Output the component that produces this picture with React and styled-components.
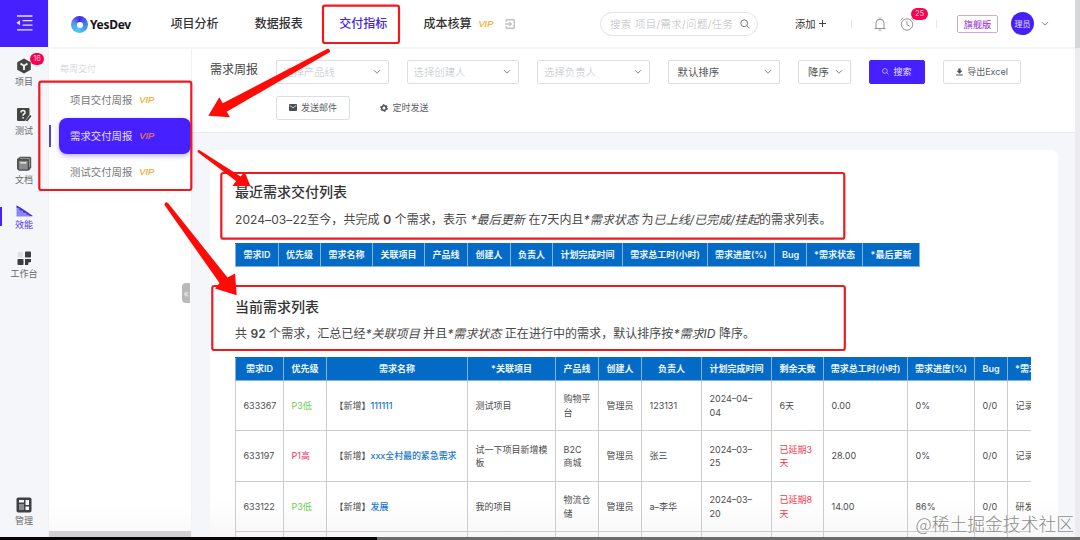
import React from 'react';
import styled, { createGlobalStyle, css } from 'styled-components';

const GlobalStyle = createGlobalStyle`
  * {
    box-sizing: border-box;
  }

  body {
    margin: 0;
    overflow: hidden;
    background: #fff;
    color: #444;
    font-family: Inter, "Noto Sans CJK SC", sans-serif;
    font-size: 9px;
  }

  h3, p {
    margin: 0;
  }
`;

const Screen = styled.div`
  position: relative;
  display: flex;
  flex-direction: column;
  width: 1080px;
  height: 540px;
  overflow: hidden;
`;

const Window = styled.div`
  display: flex;
  height: 537px;
`;

const DesktopEdge = styled.div`
  height: 3px;
  background: linear-gradient(90deg, #080607 377px, #6b6b6b 377px);
`;

const Scrollbar = styled.div`
  width: 5px;
  background: #ececee;
`;

const ScrollThumb = styled.div`
  height: 48px;
  background: #d6d7da;
`;

/* left rail */

const Rail = styled.aside`
  display: flex;
  flex-direction: column;
  width: 49px;
  background: #f4f6fa;
  border-right: 1px solid #f0f1f4;
`;

const RailToggle = styled.div`
  display: flex;
  align-items: center;
  justify-content: center;
  width: 48px;
  height: 47px;
  margin-bottom: 11px;
  padding-bottom: 2px;
  background: #4620ff;
`;

const RailItem = styled.div`
  position: relative;
  display: flex;
  flex-direction: column;
  align-items: center;
  width: 48px;
  margin-bottom: ${props => (props.$last ? '8px' : '17px')};
  margin-top: ${props => (props.$last ? 'auto' : '0')};
  color: ${props => (props.$active ? '#4a35e8' : '#6a6a6a')};

  svg {
    display: block;
  }

  ${props => props.$active && css`
    &:before {
      content: '';
      position: absolute;
      left: 0;
      top: 2px;
      width: 2px;
      height: 19px;
      background: #4620ff;
    }
  `}
`;

const RailLabel = styled.span`
  font-size: 9px;
  line-height: 15px;
  padding-bottom: 1px;
`;

const Badge = styled.span`
  position: absolute;
  left: ${props => props.$left};
  top: ${props => props.$top};
  min-width: ${props => props.$width};
  height: 12px;
  border-radius: 6px;
  background: #f80052;
  color: #ffc9da;
  font-size: 7.5px;
  line-height: 12px;
  text-align: center;
`;

/* header */

const Page = styled.div`
  display: flex;
  flex-direction: column;
  width: 1026px;
`;

const Header = styled.header`
  display: flex;
  align-items: center;
  height: 49px;
  padding-left: 22px;
  border-bottom: 2px solid #f5f5f6;
  background: #fff;
  flex-shrink: 0;
`;

const Brand = styled.div`
  display: flex;
  align-items: center;
  gap: 2px;
  width: 99.500px;
  padding-top: 2px;
  color: #151515;
  font-family: "Noto Sans", sans-serif;
  font-size: 12px;
  font-weight: 700;
  letter-spacing: -0.3px;
`;

const BrandMark = styled.span`
  display: flex;
  align-items: center;
  justify-content: center;
  width: 17px;
  height: 17px;
  border-radius: 50%;
  background: conic-gradient(#4a22ea, #3e6cf0 18%, #3f9df5 35%, #4fc6f8 52%, #48b6f5 66%, #5b8cf4 80%, #3f2ad5);

  &:after {
    content: '';
    width: 6px;
    height: 6px;
    border-radius: 50%;
    background: #fff;
  }
`;

const Nav = styled.nav`
  display: flex;
  align-items: center;
  gap: 36.3px;
  width: 429.500px;
  padding-top: 1px;
`;

const NavItem = styled.div`
  display: flex;
  align-items: center;
  color: ${props => (props.$active ? '#4325e6' : '#333')};
  font-size: 12px;
  font-weight: 500;
  line-height: 20px;
  white-space: nowrap;

  svg {
    margin-left: 12px;
  }
`;

const Vip = styled.span`
  margin-left: 7px;
  color: ${props => (props.$hot ? '#ef7d4c' : '#f0a928')};
  font-family: "Liberation Sans", sans-serif;
  font-size: 9.2px;
  font-style: italic;
  font-weight: 400;
  -webkit-text-stroke: 0.2px currentColor;
`;

const SearchBox = styled.div`
  display: flex;
  align-items: center;
  justify-content: space-between;
  width: 158px;
  height: 24px;
  margin-right: 37px;
  padding: 0 7px 0 9px;
  border: 1px solid #e2e3e6;
  border-radius: 12px;
  color: #b9bbc0;
  font-size: 10.4px;
  font-weight: 300;
  letter-spacing: 0.4px;
  white-space: nowrap;
`;

const AddLink = styled.div`
  display: flex;
  align-items: center;
  gap: 3px;
  width: 56px;
  color: #333;
  font-size: 10.3px;
`;

const Divider = styled.span`
  width: 1px;
  height: 8px;
  background: #e6e6e8;
`;

const Alerts = styled.div`
  position: relative;
  display: flex;
  align-items: center;
  gap: 13.5px;
  width: 84px;
  padding-left: 22px;
`;

const Edition = styled.div`
  display: flex;
  align-items: center;
  justify-content: center;
  width: 41px;
  height: 18px;
  margin: 0 13px 0 20px;
  border: 1px solid #cfa6e6;
  border-radius: 2px;
  color: #9425cc;
  font-size: 9.2px;
`;

const Avatar = styled.div`
  display: flex;
  align-items: center;
  justify-content: center;
  width: 23px;
  height: 23px;
  margin-right: 7px;
  border-radius: 50%;
  background: #4620f5;
  color: #e6e0ff;
  font-size: 8px;
`;

/* second level menu */

const Columns = styled.div`
  display: flex;
  height: 488px;
`;

const SideMenu = styled.aside`
  position: relative;
  display: flex;
  flex-direction: column;
  width: 143px;
  background: linear-gradient(#fff 455px, #fafafa 482px);
  border-right: 1px solid #f1f2f4;
`;

const MenuCaption = styled.div`
  height: 33px;
  padding: 13px 0 0 11px;
  color: #c9cbcf;
  font-size: 9px;
  font-weight: 300;
  line-height: 14px;
`;

const MenuItem = styled.div`
  position: relative;
  display: flex;
  align-items: center;
  height: 36px;
  margin-left: 10px;
  padding: 0 0 1px 11px;
  border-radius: 8px;
  color: #777;
  font-size: 10.4px;

  ${props => props.$active && css`
    background: #4620ff;
    box-shadow: 0 2px 5px rgba(70, 32, 255, 0.35);
    color: #e6e0ff;

    &:before {
      content: '';
      position: absolute;
      left: -10px;
      width: 2px;
      height: 22px;
      background: #5546d0;
    }
  `}
`;

const Collapse = styled.div`
  position: absolute;
  right: 1px;
  top: 234px;
  display: flex;
  align-items: center;
  justify-content: center;
  width: 8px;
  height: 20px;
  border-radius: 4px 0 0 4px;
  background: #b9b9b9;
  color: #eee;
  font-size: 9px;
`;

const MenuScroll = styled.div`
  height: 6px;
  margin-top: auto;
  background: #d2d2d5;
`;

/* content */

const Content = styled.main`
  display: flex;
  flex-direction: column;
  width: 883px;
  background: #f4f6f9;
`;

const Filters = styled.section`
  display: flex;
  gap: 18px;
  height: 84px;
  padding: 11px 0 0 18px;
  border-bottom: 1px solid #e9eaed;
  background: #fff;
  flex-shrink: 0;
`;

const FilterTitle = styled.div`
  width: 48px;
  color: #444;
  font-size: 12px;
  line-height: 20px;
  white-space: nowrap;
`;

const FilterRows = styled.div`
  display: flex;
  flex-direction: column;
  gap: 12px;
`;

const FilterRow = styled.div`
  display: flex;
  align-items: center;
  gap: ${props => props.$gap || '18px'};
`;

const Select = styled.div`
  display: flex;
  align-items: center;
  justify-content: space-between;
  width: ${props => props.$width || '112.5px'};
  height: 24px;
  padding: 0 7px 1px ${props => (props.$filled ? '9px' : '6px')};
  border: 1px solid #dcdee3;
  border-radius: 2px;
  color: ${props => (props.$filled ? '#555' : '#bdbfc5')};
  font-size: 10.4px;
  font-weight: ${props => (props.$filled ? 400 : 300)};
  white-space: nowrap;
`;

const Button = styled.div`
  display: flex;
  align-items: center;
  justify-content: center;
  gap: 4px;
  width: ${props => props.$width};
  height: 24px;
  padding-bottom: 1px;
  border: 1px solid ${props => (props.$primary ? '#4620ff' : props.$plain ? 'transparent' : '#dcdee3')};
  border-radius: 2px;
  background: ${props => (props.$primary ? '#4620ff' : '#fff')};
  color: ${props => (props.$primary ? '#e9e4ff' : '#5c5e63')};
  font-size: 9px;
`;

const Card = styled.section`
  flex: 1;
  width: 848px;
  margin: 17px 0 0 18px;
  padding: 31px 27px 0 25px;
  border-radius: 6px 6px 0 0;
  background: linear-gradient(#fff 350px, #f7f7f7 387px);
  overflow: hidden;
`;

const Heading = styled.h3`
  color: #333;
  font-size: 14px;
  font-weight: 500;
  line-height: 22px;
`;

const Summary = styled.p`
  margin: ${props => props.$margin};
  color: #484848;
  font-size: 12px;
  line-height: 20px;
  letter-spacing: ${props => props.$tracking};
  white-space: nowrap;

  b {
    font-weight: 600;
  }
`;

const TableWrap = styled.div`
  width: 796px;
  overflow: hidden;
  margin-bottom: ${props => props.$bottom || '0'};
`;

const Table = styled.table`
  width: ${props => props.$width}px;
  border-collapse: collapse;
  table-layout: fixed;
  line-height: 13.5px;
`;

const Th = styled.th`
  height: 23px;
  padding: 0;
  border: 1px solid #82b4df;
  border-top-color: #0a6cc4;
  background: #036bc5;
  color: #eef6ff;
  font-size: 9px;
  font-weight: 600;
  white-space: nowrap;
`;

const Td = styled.td`
  height: ${props => props.$height || 50}px;
  padding: 0 0 0 7.5px;
  border: 1px solid #ccc;
  color: ${props => props.$color || '#4c4c4c'};
  font-size: 9px;
  white-space: pre;
  vertical-align: middle;

  a {
    color: #1c78c8;
    font-weight: 500;
    letter-spacing: -0.1px;
  }
`;

const Annotations = styled.svg`
  position: absolute;
  inset: 0;
  pointer-events: none;
`;

const Watermark = styled.div`
  position: absolute;
  right: 6px;
  bottom: 4px;
  color: rgba(105, 105, 105, 0.8);
  font-family: "Noto Sans CJK SC", sans-serif;
  font-size: 17.8px;
  font-weight: 300;
  line-height: 26px;
  text-shadow: 0 0 1px #fff;
  white-space: nowrap;
`;

const Chevron = () => (
  <svg width="8" height="6" viewBox="0 0 8 6" fill="none" stroke="#85878c">
    <path d="M1 1.2l3 3 3-3" />
  </svg>
);

const Magnifier = ({ size = 10, color = '#777' }) => (
  <svg width={size} height={size} viewBox="0 0 10 10" fill="none" stroke={color}>
    <circle cx="4.2" cy="4.2" r="3.4" />
    <path d="M6.8 6.8L9.5 9.3" />
  </svg>
);

const ToggleIcon = () => (
  <svg width="17" height="16" viewBox="0 0 17 16" fill="none" stroke="#e8e3ff" strokeWidth="1.3">
    <path d="M1 1h15.500M6.500 5.600h10M6.500 10.200h10M1 14.800h15.500" />
    <path d="M4 5.300v5L0.300 7.800z" fill="#e8e3ff" stroke="none" />
  </svg>
);

const CubeIcon = () => (
  <svg width="16" height="16" viewBox="0 0 16 16">
    <path d="M8 .5l6.800 3.700v7.600L8 15.500 1.200 11.800V4.200z" fill="#444" />
    <path d="M4.500 5.500L8 8l3.500-2.500M8 8v4" fill="none" stroke="#f4f6fa" strokeWidth="1.800" />
  </svg>
);

const TestIcon = () => (
  <svg width="16" height="16" viewBox="0 0 16 16">
    <path d="M2 1h10.500q1 0 1 1v5.500L9 14H2q-1 0-1-1V2q0-1 1-1z" fill="#444" />
    <path d="M5 5.600q0-2 2-2t2 1.800q0 1-1 1.600T7 8.800M7 10v1.600" fill="none" stroke="#f4f6fa" strokeWidth="1.500" />
    <path d="M14.800 8.500L10.500 14" stroke="#444" strokeWidth="2" />
  </svg>
);

const DocIcon = () => (
  <svg width="16" height="16" viewBox="0 0 16 16">
    <path d="M4 .8h10q1.200 0 1.200 1.200v9.500l-2 3H3L1 13V3z" fill="#555" />
    <rect x="2.200" y="4.200" width="10" height="9.800" rx="1" fill="#8c8c8c" stroke="#444" />
    <path d="M4.200 6.900h6.200" stroke="#eee" strokeWidth="1.300" />
    <path d="M4 2.500h9.500v8.500" fill="none" stroke="#aaa" strokeWidth=".7" />
  </svg>
);

const TrendIcon = () => (
  <svg width="17" height="12" viewBox="0 0 17 12">
    <path d="M0.500 .5L16.500 10.500v1H.5z" fill="#8f86f3" />
    <path d="M.5.5v2l3 1v1.800l3.500.4v1.800l3.500.5v1.500l3 .5v1h3L10 6.200 4 2.200z" fill="#4030d8" />
  </svg>
);

const BlocksIcon = () => (
  <svg width="16" height="16" viewBox="0 0 16 16">
    <rect x="1.500" y="2" width="5.500" height="5.500" fill="#e0e0e2" />
    <rect x="9" y="1.500" width="6" height="6" rx=".8" fill="#3c3c3c" />
    <rect x="1.500" y="9" width="6" height="6" rx=".8" fill="#3c3c3c" />
    <path d="M9 9h6v3l-2.500.5-.5 2.500H9z" fill="#3c3c3c" />
  </svg>
);

const ManageIcon = () => (
  <svg width="16" height="16" viewBox="0 0 16 16">
    <rect x=".5" y=".5" width="15" height="15" rx="1.800" fill="#3d4143" />
    <path d="M3 3h5v2.500H3zM9.500 3H13v5H9.500zM9.500 9.500H13V13H9.500z" fill="#f4f6fa" />
    <path d="M3 7h5v6H3z" fill="#8b8e8f" />
  </svg>
);

const LeaveIcon = () => (
  <svg width="10" height="10" viewBox="0 0 10 10" fill="none" stroke="#8c8e93" strokeWidth=".8">
    <path d="M1 2.800V.8h8.200v8.400H1V7.200M0 5h6.200M4.400 3L6.400 5l-2 2" />
  </svg>
);

const BellIcon = () => (
  <svg width="12" height="14" viewBox="0 0 12 14" fill="none" stroke="#85878c" strokeWidth=".9">
    <path d="M.5 11.500h11M2 11.300V6q0-3.800 4-3.800T10 6v5.300M6 2.200V.5M4.800 13.200h2.400" />
  </svg>
);

const ClockIcon = () => (
  <svg width="14" height="14" viewBox="0 0 14 14" fill="none" stroke="#85878c" strokeWidth=".9">
    <circle cx="7" cy="7.500" r="5.700" />
    <path d="M7 4.200v3.600l2.800 1.300M.5 3.200L3 .8M11 .8l2.500 2.400" />
  </svg>
);

const MailIcon = () => (
  <svg width="8" height="7" viewBox="0 0 8 7">
    <rect width="8" height="7" rx=".8" fill="#4c4e52" />
    <path d="M.8 1.500L4 3.800l3.200-2.300" fill="none" stroke="#fff" strokeWidth=".7" />
  </svg>
);

const GearIcon = () => (
  <svg width="8" height="8" viewBox="0 0 8 8" fill="none" stroke="#4c4e52">
    <circle cx="4" cy="4" r="2.300" strokeWidth="1.500" />
    <circle cx="4" cy="4" r="3.400" strokeWidth="1" strokeDasharray="1.780 1.780" />
  </svg>
);

const DownloadIcon = () => (
  <svg width="7" height="8" viewBox="0 0 7 8" fill="#4c4e52">
    <path d="M2.400.5h2.200v2.300h1.900L3.500 5.700.5 2.800h1.900zM.2 6.600h6.600v1H.2z" />
  </svg>
);

const rail = [
  { label: '项目', icon: <CubeIcon />, badge: '16' },
  { label: '测试', icon: <TestIcon /> },
  { label: '文档', icon: <DocIcon /> },
  { label: '效能', icon: <TrendIcon />, active: true },
  { label: '工作台', icon: <BlocksIcon /> },
  { label: '管理', icon: <ManageIcon />, last: true },
];

const recentColumns = [
  ['需求ID', 43], ['优先级', 42], ['需求名称', 52], ['关联项目', 52], ['产品线', 43], ['创建人', 43],
  ['负责人', 42], ['计划完成时间', 70], ['需求总工时(小时)', 85], ['需求进度(%)', 67], ['Bug', 32],
  ['*需求状态', 56], ['*最后更新', 57],
];

const currentColumns = [
  ['需求ID', 48], ['优先级', 43], ['需求名称', 141], ['*关联项目', 88], ['产品线', 43], ['创建人', 43],
  ['负责人', 60], ['计划完成时间', 70], ['剩余天数', 52], ['需求总工时(小时)', 84], ['需求进度(%)', 67],
  ['Bug', 33], ['*需求状态', 56],
];

const demands = [
  { id: '633367', level: 'P3低', name: '111111', project: '测试项目', line: '购物平\n台', owner: '123131', due: '2024–04–\n04', left: '6天', hours: '0.00', progress: '0%', status: '记录' },
  { id: '633197', level: 'P1高', name: 'xxx全村最的紧急需求', project: '试一下项目新增模\n板', line: 'B2C\n商城', owner: '张三', due: '2024–03–\n25', left: '已延期3\n天', hours: '28.00', progress: '0%', status: '记录' },
  { id: '633122', level: 'P3低', name: '发展', project: '我的项目', line: '物流仓\n储', owner: 'a–李华', due: '2024–03–\n20', left: '已延期8\n天', hours: '14.00', progress: '86%', status: '研发' },
];

const HeadRow = ({ columns }) => (
  <>
    <colgroup>
      {columns.map(([label, width]) => <col key={label} width={width} />)}
    </colgroup>
    <thead>
      <tr>
        {columns.map(([label]) => <Th key={label}>{label}</Th>)}
      </tr>
    </thead>
  </>
);

const sum = columns => columns.reduce((total, [, width]) => total + width, 1);

const DemandRow = ({ row, height }) => (
  <tr>
    <Td $height={height}>{row.id}</Td>
    <Td $color={row.level === 'P1高' ? '#e8355f' : '#68cf4c'}>{row.level}</Td>
    <Td>【新增】<a>{row.name}</a></Td>
    <Td>{row.project}</Td>
    <Td>{row.line}</Td>
    <Td>管理员</Td>
    <Td>{row.owner}</Td>
    <Td>{row.due}</Td>
    <Td $color={row.left.startsWith('已') ? '#f5364a' : undefined}>{row.left}</Td>
    <Td>{row.hours}</Td>
    <Td>{row.progress}</Td>
    <Td>0/0</Td>
    <Td>{row.status}</Td>
  </tr>
);

const App = () => {
  return (
    <Screen>
      <GlobalStyle />
      <Window>
        <Rail>
          <RailToggle><ToggleIcon /></RailToggle>
          {rail.map(item => (
            <RailItem key={item.label} $active={item.active} $last={item.last}>
              {item.icon}
              <RailLabel>{item.label}</RailLabel>
              {item.badge && <Badge $left="30px" $top="-5px" $width="14px">{item.badge}</Badge>}
            </RailItem>
          ))}
        </Rail>

        <Page>
          <Header>
            <Brand><BrandMark />YesDev</Brand>
            <Nav>
              <NavItem>项目分析</NavItem>
              <NavItem>数据报表</NavItem>
              <NavItem $active>交付指标</NavItem>
              <NavItem>成本核算<Vip>VIP</Vip><LeaveIcon /></NavItem>
            </Nav>
            <SearchBox>搜索 项目/需求/问题/任务<Magnifier /></SearchBox>
            <AddLink>
              添加
              <svg width="7" height="7" viewBox="0 0 7 7" stroke="#444"><path d="M0 3.500h7M3.500 0v7" /></svg>
            </AddLink>
            <Divider />
            <Alerts>
              <BellIcon />
              <ClockIcon />
              <Badge $left="59px" $top="-9px" $width="17px">25</Badge>
            </Alerts>
            <Divider />
            <Edition>旗舰版</Edition>
            <Avatar>理员</Avatar>
            <Chevron />
          </Header>

          <Columns>
            <SideMenu>
              <MenuCaption>每周交付</MenuCaption>
              <MenuItem>项目交付周报<Vip>VIP</Vip></MenuItem>
              <MenuItem $active>需求交付周报<Vip $hot>VIP</Vip></MenuItem>
              <MenuItem>测试交付周报<Vip>VIP</Vip></MenuItem>
              <Collapse>«</Collapse>
              <MenuScroll />
            </SideMenu>

            <Content>
              <Filters>
                <FilterTitle>需求周报</FilterTitle>
                <FilterRows>
                  <FilterRow>
                    <Select>选择产品线<Chevron /></Select>
                    <Select>选择创建人<Chevron /></Select>
                    <Select>选择负责人<Chevron /></Select>
                    <Select $filled>默认排序<Chevron /></Select>
                    <Select $filled $width="53px">降序<Chevron /></Select>
                    <Button $primary $width="56px"><Magnifier size={7} color="#d9d1ff" />搜索</Button>
                    <Button $width="78px"><DownloadIcon />导出Excel</Button>
                  </FilterRow>
                  <FilterRow $gap="16px">
                    <Button $width="74px"><MailIcon />发送邮件</Button>
                    <Button $plain $width="77px"><GearIcon />定时发送</Button>
                  </FilterRow>
                </FilterRows>
              </Filters>

              <Card>
                <Heading>最近需求交付列表</Heading>
                <Summary $margin="7px 0 13px" $tracking="0.08px">
                  2024–03–22至今，共完成 <b>0</b> 个需求，表示 <i>*最后更新</i> 在7天内且<i>*需求状态</i> 为<i>已上线/已完成/挂起</i>的需求列表。
                </Summary>
                <TableWrap $bottom="29px">
                  <Table $width={sum(recentColumns)}>
                    <HeadRow columns={recentColumns} />
                  </Table>
                </TableWrap>

                <Heading>当前需求列表</Heading>
                <Summary $margin="6px 0 13px" $tracking="0.04px">
                  共 <b>92</b> 个需求，汇总已经<i>*关联项目</i> 并且<i>*需求状态</i> 正在进行中的需求，默认排序按<i>*需求ID</i> 降序。
                </Summary>
                <TableWrap>
                  <Table $width={sum(currentColumns)}>
                    <HeadRow columns={currentColumns} />
                    <tbody>
                      {demands.map((row, i) => <DemandRow key={row.id} row={row} height={i === 1 ? 51 : 50} />)}
                      <tr>
                        {currentColumns.map(([label]) => <Td key={label} $height={20} />)}
                      </tr>
                    </tbody>
                  </Table>
                </TableWrap>
              </Card>
            </Content>
          </Columns>
        </Page>

        <Scrollbar><ScrollThumb /></Scrollbar>
      </Window>
      <DesktopEdge />

      <Annotations width="1080" height="540" viewBox="0 0 1080 540">
        <g fill="none" stroke="#ee1a20" strokeWidth="2.200">
          <rect x="39.300" y="81.700" width="152" height="108.300" rx="2" />
          <rect x="323" y="5.700" width="76" height="37.300" rx="2" />
          <rect x="221.300" y="173" width="623" height="65.700" rx="2" />
          <rect x="212.300" y="286" width="632.500" height="64" rx="2" />
        </g>
        <g fill="#fe0b08">
          <path d="M327 49q3-1 3 3L226.700 111.700 230 117.300 208.300 115.700 219.300 97.300 222.700 103.300z" />
          <path d="M197.500 152q0-3 2.500-1.500L240.700 176.500 244.500 171.500 250.500 186.300 232.500 186 236 181z" />
          <path d="M164.500 205q0-4 3.500-2L227.500 277.500 235 273.500 236.700 295.200 215 288.500 219.500 283z" />
        </g>
      </Annotations>
      <Watermark>@稀土掘金技术社区</Watermark>
    </Screen>
  );
};

export default App;
